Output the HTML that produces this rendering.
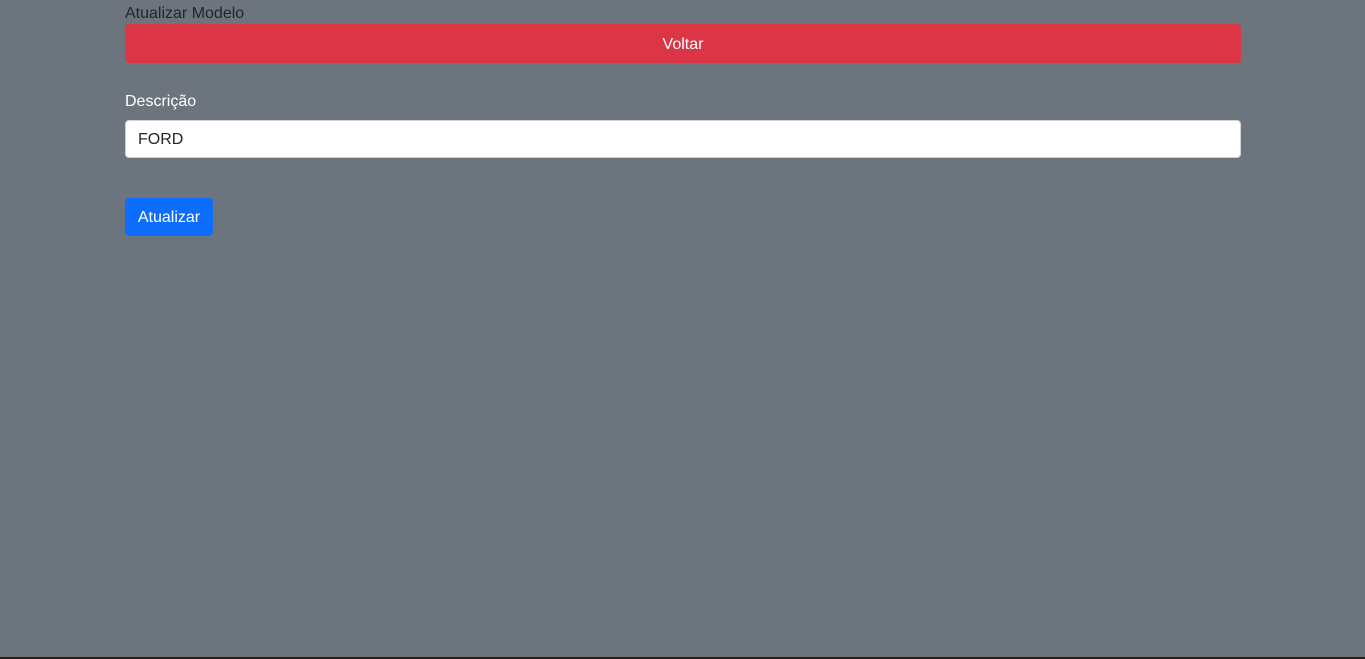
<!DOCTYPE html>
<html><head><meta charset="utf-8"><style>
html,body{margin:0;padding:0;width:1365px;height:659px;background:#6c757d;overflow:hidden;font-family:"Liberation Sans",sans-serif;}
.t{position:absolute;left:125px;top:4px;font-size:16px;color:#212529;line-height:20px;}
.v{position:absolute;left:125px;top:24px;width:1116px;height:39px;background:#dc3545;border-radius:4px;color:#fff;font-size:16px;text-align:center;line-height:41px;}
.l{position:absolute;left:125px;top:92px;font-size:16px;color:#fff;line-height:20px;}
.i{position:absolute;left:125px;top:120px;width:1114px;height:36px;background:#fff;border:1px solid #ced4da;border-radius:4px;font-size:16px;color:#212529;line-height:38px;}
.i span{margin-left:12px;}
.b{position:absolute;left:125px;top:198px;width:88px;height:38px;background:#0d6efd;border-radius:4px;color:#fff;font-size:16px;text-align:center;line-height:40px;}
.bot{position:absolute;left:0;top:657px;width:1365px;height:2px;background:#222;}
</style></head><body>
<div class="t">Atualizar Modelo</div>
<div class="v">Voltar</div>
<div class="l">Descrição</div>
<div class="i"><span>FORD</span></div>
<div class="b">Atualizar</div>
<div class="bot"></div>
</body></html>
